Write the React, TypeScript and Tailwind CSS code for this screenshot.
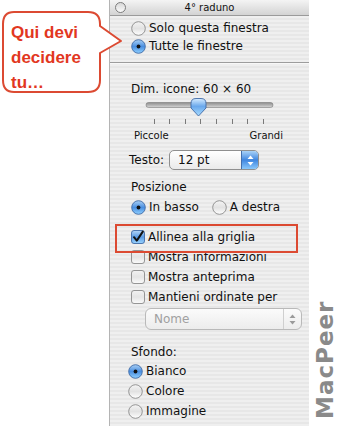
import React from "react"

function Radio({ on }: { on?: boolean }) {
  return (
    <svg width="15" height="15" viewBox="0 0 15 15" className="shrink-0">
      <defs>
        <linearGradient id={on ? "rOn" : "rOff"} x1="0" y1="0" x2="0" y2="1">
          {on ? (
            <>
              <stop offset="0" stopColor="#a9d0f5" />
              <stop offset="0.5" stopColor="#4b8fe0" />
              <stop offset="1" stopColor="#8fd0ff" />
            </>
          ) : (
            <>
              <stop offset="0" stopColor="#f4f4f4" />
              <stop offset="0.5" stopColor="#e2e2e2" />
              <stop offset="1" stopColor="#ffffff" />
            </>
          )}
        </linearGradient>
      </defs>
      <circle cx="7.5" cy="7.5" r="6.8" fill={`url(#${on ? "rOn" : "rOff"})`} stroke={on ? "#3f6aa6" : "#8a8a8a"} strokeWidth="0.9" />
      {on && <circle cx="7.5" cy="7.5" r="1.9" fill="#111" />}
    </svg>
  )
}

function Check({ on }: { on?: boolean }) {
  return (
    <svg width="14" height="14" viewBox="0 0 14 14" className="shrink-0">
      <defs>
        <linearGradient id={on ? "cOn" : "cOff"} x1="0" y1="0" x2="0" y2="1">
          {on ? (
            <>
              <stop offset="0" stopColor="#b5d6f7" />
              <stop offset="0.5" stopColor="#5a9be4" />
              <stop offset="1" stopColor="#9ad4ff" />
            </>
          ) : (
            <>
              <stop offset="0" stopColor="#f2f2f2" />
              <stop offset="0.5" stopColor="#e4e4e4" />
              <stop offset="1" stopColor="#fbfbfb" />
            </>
          )}
        </linearGradient>
      </defs>
      <rect x="0.5" y="0.5" width="13" height="13" rx="2.5" fill={`url(#${on ? "cOn" : "cOff"})`} stroke={on ? "#3f6aa6" : "#8a8a8a"} strokeWidth="0.9" />
      {on && <path d="M3 7.2 L5.8 10.6 L11.8 1.6" fill="none" stroke="#111" strokeWidth="2" strokeLinecap="round" strokeLinejoin="round" />}
    </svg>
  )
}

function Row({ children, label, className = "h-[20px]" }: { children: React.ReactNode; label: string; className?: string }) {
  return (
    <div className={`flex items-center gap-[3px] ${className}`}>
      {children}
      <span>{label}</span>
    </div>
  )
}

function Arrows({ color }: { color: string }) {
  return (
    <svg width="7" height="11" viewBox="0 0 7 11">
      <path d="M3.5 0.5 L6.5 4 H0.5 Z" fill={color} />
      <path d="M3.5 10.5 L6.5 7 H0.5 Z" fill={color} />
    </svg>
  )
}

function Slider() {
  const ticks = [153, 168, 184, 199, 215, 231, 246, 262]
  return (
    <div className="relative h-[28px] w-[200px] shrink-0">
      <svg width="200" height="28" viewBox="109 97 200 28" className="absolute left-0 top-0">
        <defs>
          <linearGradient id="trk" x1="0" y1="0" x2="0" y2="1">
            <stop offset="0" stopColor="#8c8c8c" />
            <stop offset="1" stopColor="#d6d6d6" />
          </linearGradient>
          <linearGradient id="thm" x1="0" y1="0" x2="0" y2="1">
            <stop offset="0" stopColor="#d6ecff" />
            <stop offset="0.45" stopColor="#6aa8ec" />
            <stop offset="1" stopColor="#a8dcff" />
          </linearGradient>
        </defs>
        <rect x="145" y="102.5" width="127" height="5" rx="2.5" fill="url(#trk)" stroke="#7a7a7a" strokeWidth="0.6" />
        {ticks.map((x) => (
          <rect key={x} x={x} y="119" width="1" height="5" fill="#7a7a7a" />
        ))}
        <path d="M190 103.5 Q190 98.5 195 98.5 H200 Q205 98.5 205 103.5 V108 L197.5 116 L190 108 Z" fill="url(#thm)" stroke="#3f6aa6" strokeWidth="0.9" />
      </svg>
    </div>
  )
}

export default function App() {
  return (
    <div className="relative h-[426px] w-[338px] overflow-hidden bg-white font-['DejaVu_Sans',sans-serif] text-[12px] text-[#111]">
      <div className="ml-[109px] flex h-full w-[200px] flex-col border-l border-[#b4b4b4] bg-[repeating-linear-gradient(#efefef_0_2px,#e7e7e7_2px_4px)]">
        <div className="relative flex h-[16px] shrink-0 items-center justify-center border-b border-[#9a9a9a] bg-gradient-to-b from-[#f4f4f4] to-[#d3d3d3] text-[10px]">
          <span className="absolute left-[5px] top-[2px] h-[11px] w-[11px] rounded-full border border-[#7d7d7d] bg-gradient-to-b from-[#d8d8d8] to-[#fafafa]" />
          <span>4° raduno</span>
        </div>

        <div className="flex flex-col pl-[21px] pt-[3px]">
          <Row label="Solo questa finestra" className="h-[18px]"><Radio /></Row>
          <Row label="Tutte le finestre" className="h-[18px]"><Radio on /></Row>
        </div>
        <div className="mt-[7px] h-[2px] shrink-0 border-t border-[#9d9d9d] bg-white/70" />

        <div className="mt-[17px] flex h-[16px] shrink-0 items-center pl-[21px]">Dim. icone: 60 × 60</div>
        <Slider />
        <div className="mt-[3px] flex h-[14px] w-[173px] shrink-0 items-center justify-between pl-[24px] text-[10px]">
          <span>Piccole</span>
          <span>Grandi</span>
        </div>

        <div className="mt-[8px] flex h-[20px] shrink-0 items-center pl-[19px]">
          <span>Testo:</span>
          <div className="ml-[5px] flex h-[20px] w-[90px] items-stretch overflow-hidden rounded-[5px] border border-[#8f8f8f] bg-gradient-to-b from-[#ffffff] to-[#eaeaea]">
            <span className="flex flex-1 items-center pl-[8px]">12 pt</span>
            <span className="flex w-[17px] items-center justify-center border-l border-[#4470ad] bg-gradient-to-b from-[#a9d2f7] via-[#3f86df] to-[#8ac8fb]">
              <Arrows color="#ffffff" />
            </span>
          </div>
        </div>

        <div className="mt-[7px] flex h-[20px] shrink-0 items-center pl-[21px]">Posizione</div>
        <div className="flex h-[20px] shrink-0 items-center pl-[21px]">
          <Row label="In basso"><Radio on /></Row>
          <Row label="A destra" className="ml-[13px] h-[20px]"><Radio /></Row>
        </div>

        <div className="mt-[10px] flex flex-col pl-[21px]">
          <Row label="Allinea alla griglia"><Check on /></Row>
          <Row label="Mostra informazioni"><Check /></Row>
          <Row label="Mostra anteprima"><Check /></Row>
          <Row label="Mantieni ordinate per"><Check /></Row>
        </div>

        <div className="ml-[35px] mt-[1px] flex h-[22px] w-[157px] shrink-0 items-stretch rounded-[6px] border border-[#b9b9b9] bg-gradient-to-b from-[#fbfbfb] to-[#ececec]">
          <span className="flex flex-1 items-center pl-[8px] text-[#a0a0a0]">Nome</span>
          <span className="flex w-[18px] items-center justify-center border-l border-[#cfcfcf]">
            <Arrows color="#9a9a9a" />
          </span>
        </div>

        <div className="mt-[12px] flex h-[19px] shrink-0 items-center pl-[21px]">Sfondo:</div>
        <div className="flex flex-col pl-[18px]">
          <Row label="Bianco"><Radio on /></Row>
          <Row label="Colore"><Radio /></Row>
          <Row label="Immagine"><Radio /></Row>
        </div>
      </div>

      {/* callout */}
      <div className="absolute left-0 top-0 h-[100px] w-[125px]">
        <svg width="125" height="100" viewBox="0 0 125 100" className="absolute left-0 top-0">
          <path
            d="M14 12 H88 Q100 12 100 24 V26 L121 41 L100 53 V80 Q100 92 88 92 H14 Q3 92 3 80 V24 Q3 12 14 12 Z"
            fill="#ffffff"
            stroke="#dc4a32"
            strokeWidth="2"
            strokeLinejoin="round"
          />
        </svg>
        <div className="absolute left-[11px] top-[20px] font-['Liberation_Sans',sans-serif] text-[17px] font-bold leading-[25px] text-[#e2371f]">
          Qui devi<br />decidere<br />tu…
        </div>
      </div>

      {/* highlight */}
      <div className="absolute left-[115px] top-[224px] h-[29px] w-[183px] border-2 border-[#dc4a32]" />

      {/* watermark */}
      <div className="absolute left-[313px] top-[298px] flex h-[123px] w-[24px] rotate-180 items-center justify-center font-['DejaVu_Sans',sans-serif] text-[23px] font-bold leading-[24px] tracking-[1px] text-[#8a8a8a] [writing-mode:vertical-rl]">
        MacPeer
      </div>
    </div>
  )
}
